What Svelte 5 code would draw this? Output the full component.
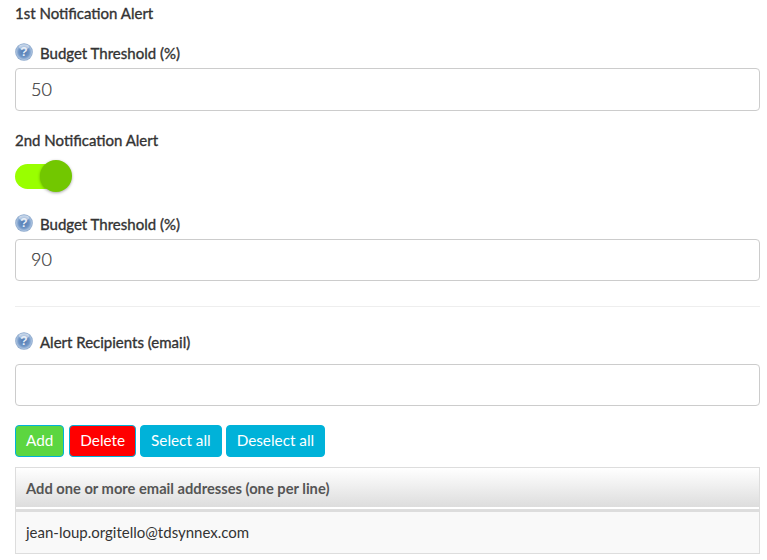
<script lang="ts">
	let first = $state('50');
	let second = $state('90');
	let recipient = $state('');
	let secondOn = $state(true);
	const emails = ['jean-loup.orgitello@tdsynnex.com'];
</script>

{#snippet help(id)}
	<svg class="help" width="18" height="18" viewBox="0 0 18 18" aria-hidden="true">
		<defs>
			<radialGradient id={id} cx="50%" cy="50%" r="50%">
				<stop offset="0%" stop-color="#4f78b0" />
				<stop offset="60%" stop-color="#6f95c6" />
				<stop offset="85%" stop-color="#a5bedd" />
				<stop offset="100%" stop-color="#86a3c8" />
			</radialGradient>
		</defs>
		<circle cx="9" cy="9" r="8.8" fill="url(#{id})" />
		<ellipse cx="9" cy="4" rx="5" ry="2.4" fill="#fff" opacity="0.45" />
		<text x="9" y="13" text-anchor="middle" class="q">?</text>
	</svg>
{/snippet}

<div class="page">
	<div class="heading first">1st Notification Alert</div>

	<label class="label l1" for="t1">{@render help('h1')}Budget Threshold (%)</label>
	<input id="t1" class="field" bind:value={first} />

	<div class="heading second">2nd Notification Alert</div>
	<button class="toggle" class:on={secondOn} aria-label="Toggle 2nd alert" onclick={() => (secondOn = !secondOn)}>
		<span class="knob"></span>
	</button>

	<label class="label l2" for="t2">{@render help('h2')}Budget Threshold (%)</label>
	<input id="t2" class="field f2" bind:value={second} />

	<hr />

	<label class="label l3" for="t3">{@render help('h3')}Alert Recipients (email)</label>
	<input id="t3" class="field f2" bind:value={recipient} />

	<div class="actions">
		<button class="btn add">Add</button>
		<button class="btn del">Delete</button>
		<button class="btn info">Select all</button>
		<button class="btn info">Deselect all</button>
	</div>

	<div class="list">
		<div class="list-head">Add one or more email addresses (one per line)</div>
		{#each emails as email}
			<div class="list-row">{email}</div>
		{/each}
	</div>
</div>

<style>
	:global(body) {
		margin: 0;
		background: #fff;
		font-family: Lato, 'Open Sans', sans-serif;
		color: #333;
	}
	.page {
		padding: 4px 7px 0 15px;
		height: 556px;
		overflow: hidden;
	}
	.heading {
		font-size: 15px;
		line-height: 18px;
		color: #333;
		-webkit-text-stroke: 0.35px #333;
	}
	.second {
		margin-top: 20px;
	}
	.label {
		display: flex;
		align-items: center;
		font-size: 15px;
		line-height: 18px;
		color: #333;
		-webkit-text-stroke: 0.35px #333;
		margin-bottom: 6px;
	}
	.l1 {
		margin-top: 22px;
	}
	.l2 {
		margin-top: 23px;
	}
	.l3 {
		margin-top: 26px;
		margin-bottom: 13px;
	}
	.help {
		margin-right: 7px;
		margin-top: -3px;
		flex: none;
	}
	.q {
		font-family: 'Liberation Sans', sans-serif;
		font-size: 12px;
		font-weight: 700;
		fill: #e8eef7;
		stroke: none;
	}
	.field {
		display: block;
		box-sizing: border-box;
		width: 100%;
		height: 43px;
		border: 1px solid #ccc;
		border-radius: 4px;
		padding: 0 15px 2px;
		font-family: Lato, sans-serif;
		font-size: 18px;
		font-weight: 300;
		color: #333;
		-webkit-text-stroke: 0.2px #444;
		background: #fff;
		outline: none;
	}
	.f2 {
		height: 42px;
	}
	.toggle {
		display: block;
		position: relative;
		width: 57px;
		height: 32px;
		margin: 11px 0 0;
		padding: 0;
		border: 0;
		background: none;
		cursor: pointer;
	}
	.toggle::before {
		content: '';
		position: absolute;
		left: 0;
		top: 4px;
		width: 42px;
		height: 25px;
		border-radius: 13px;
		background: #99ff00;
	}
	.knob {
		position: absolute;
		left: 25px;
		top: 0;
		width: 32px;
		height: 32px;
		border-radius: 50%;
		background: #72c700;
		box-shadow: 0 1px 3px rgba(0, 0, 0, 0.35);
	}
	hr {
		border: 0;
		border-top: 1px solid #eee;
		margin: 25px 0 0;
	}
	.actions {
		display: flex;
		gap: 4px;
		margin-top: 19px;
	}
	.btn {
		height: 32px;
		padding: 0 10px 2px;
		border: 1px solid #00b2d9;
		border-radius: 4px;
		font-family: Lato, sans-serif;
		font-size: 15.3px;
		color: #fff;
		cursor: pointer;
	}
	.add {
		background: #5cd640;
		margin-right: 1px;
	}
	.del {
		background: #ff0000;
	}
	.info {
		background: #00b2d9;
	}
	.list {
		margin-top: 10px;
		border: 1px solid #ddd;
	}
	.list-head {
		box-sizing: content-box;
		height: 39px;
		padding: 0 10px;
		display: flex;
		align-items: center;
		font-size: 14.7px;
		font-weight: 700;
		color: #555;
		background: linear-gradient(#fff, #ddd);
		border-bottom: 2px solid #fff;
	}
	.list-row {
		box-sizing: border-box;
		height: 44px;
		border-top: 3px solid #ddd;
		padding: 0 10px 2px;
		display: flex;
		align-items: center;
		font-size: 15px;
		color: #333;
		background: #f9f9f9;
	}
</style>
